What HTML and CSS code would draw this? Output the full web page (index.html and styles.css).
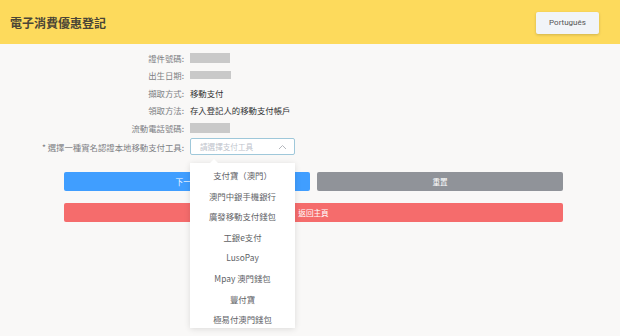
FILE: index.html
```html
<!DOCTYPE html>
<html lang="zh-Hant">
<head>
<meta charset="UTF-8">
<meta name="viewport" content="width=device-width, initial-scale=1.0">
<title>電子消費優惠登記</title>
<link rel="stylesheet" href="styles.css">
</head>
<body>
<header class="top-bar">
    <h1>電子消費優惠登記</h1>
    <button type="button" class="lang-btn">Português</button>
</header>

<div class="container">
    <form class="reg-form">
        <div class="form-row">
            <label>證件號碼:</label>
            <span class="masked"></span>
        </div>
        <div class="form-row">
            <label>出生日期:</label>
            <span class="masked wide"></span>
        </div>
        <div class="form-row">
            <label>擷取方式:</label>
            <span class="value">移動支付</span>
        </div>
        <div class="form-row">
            <label>領取方法:</label>
            <span class="value">存入登記人的移動支付帳戶</span>
        </div>
        <div class="form-row">
            <label>流動電話號碼:</label>
            <span class="masked"></span>
        </div>
        <div class="form-row select-row">
            <label>* 選擇一種實名認證本地移動支付工具:</label>
            <div class="select-wrap">
                <div class="select-box">
                    <span class="placeholder">請選擇支付工具</span>
                    <svg class="arrow" width="9" height="6" viewBox="0 0 9 6"><path d="M1 5 L4.5 1.5 L8 5" fill="none" stroke="#b4b7bd" stroke-width="1"/></svg>
                </div>
                <div class="dropdown">
                    <span class="pointer"></span>
                    <ul>
                        <li>支付寶（澳門）</li>
                        <li>澳門中銀手機銀行</li>
                        <li>廣發移動支付錢包</li>
                        <li>工銀e支付</li>
                        <li>LusoPay</li>
                        <li>Mpay 澳門錢包</li>
                        <li>豐付寶</li>
                        <li>極易付澳門錢包</li>
                    </ul>
                </div>
            </div>
        </div>

        <div class="btn-row first-btns">
            <button type="button" class="btn btn-blue">下一步</button>
            <button type="button" class="btn btn-grey">重置</button>
        </div>
        <div class="btn-row">
            <button type="button" class="btn btn-red">返回主頁</button>
        </div>
    </form>
</div>
</body>
</html>
```

FILE: styles.css
```css
html, body {
    min-height: 100vh;
}

body {
    margin: 0;
    background-color: #f9f8f7;
    font-family: "Noto Sans CJK TC", "Noto Sans", sans-serif;
    color: #606266;
}

.top-bar {
    height: 44px;
    display: flex;
    align-items: center;
    justify-content: space-between;
    padding: 0 21px 0 10px;
    background-color: #fdda5c;
}

.top-bar h1 {
    margin: 0;
    font-size: 12px;
    font-weight: 700;
    color: #4a4536;
}

.lang-btn {
    width: 63px;
    height: 22px;
    margin-top: 1px;
    padding: 0;
    border: none;
    border-radius: 2px;
    background-color: #f1f4f8;
    box-shadow: 0 1px 3px rgba(0, 0, 0, 0.18);
    font-family: "Roboto", "Noto Sans", sans-serif;
    font-size: 8px;
    color: #555;
}

.container {
    width: 499px;
    margin-left: 64px;
    padding-top: 5px;
    padding-bottom: 120px;
}

.form-row {
    display: flex;
    align-items: center;
    height: 17.5px;
    font-size: 8.4px;
}

/* long labels grow to the left, like the original */
.form-row label {
    width: 120px;
    flex-shrink: 0;
    margin-right: 6px;
    display: flex;
    justify-content: flex-end;
    color: #7d7f84;
    white-space: nowrap;
}

.masked {
    width: 40px;
    height: 10px;
    background-color: #c9c9c9;
}

.masked.wide {
    width: 41px;
    height: 8px;
}

.value {
    color: #303133;
}

.select-row {
    height: 20px;
}

.select-wrap {
    position: relative;
}

.select-box {
    width: 105px;
    height: 17px;
    display: flex;
    align-items: center;
    justify-content: space-between;
    padding: 0 7px 0 9px;
    box-sizing: border-box;
    border: 1px solid #9fc8da;
    border-radius: 2px;
    background-color: #fff;
}

.placeholder {
    font-size: 7.6px;
    color: #c0c4cc;
}

.dropdown {
    position: absolute;
    top: 25px;
    left: 0;
    width: 105px;
    height: 165px;
    background-color: #fff;
    box-shadow: 0 1px 6px rgba(0, 0, 0, 0.12);
    z-index: 5;
}

.pointer {
    position: absolute;
    top: -4px;
    left: 20px;
    width: 0;
    height: 0;
    border-left: 4px solid transparent;
    border-right: 4px solid transparent;
    border-bottom: 4px solid #fff;
}

.dropdown ul {
    list-style: none;
    margin: 0;
    padding: 2px 0 0;
    height: 163px;
    overflow: hidden;
}

.dropdown li {
    height: 20.6px;
    line-height: 20.6px;
    text-align: center;
    font-size: 8.4px;
    color: #606266;
    white-space: nowrap;
}

.btn-row {
    display: flex;
    gap: 7px;
    margin-top: 12px;
}

.btn-row.first-btns {
    margin-top: 15px;
}

.btn {
    flex: 1;
    height: 19px;
    padding: 0;
    border: none;
    border-radius: 2px;
    font-family: "Noto Sans CJK TC", sans-serif;
    font-size: 7.6px;
    color: #fff;
}

.btn-blue {
    background-color: #409eff;
}

.btn-grey {
    background-color: #909399;
}

.btn-red {
    background-color: #f56c6c;
}
```
